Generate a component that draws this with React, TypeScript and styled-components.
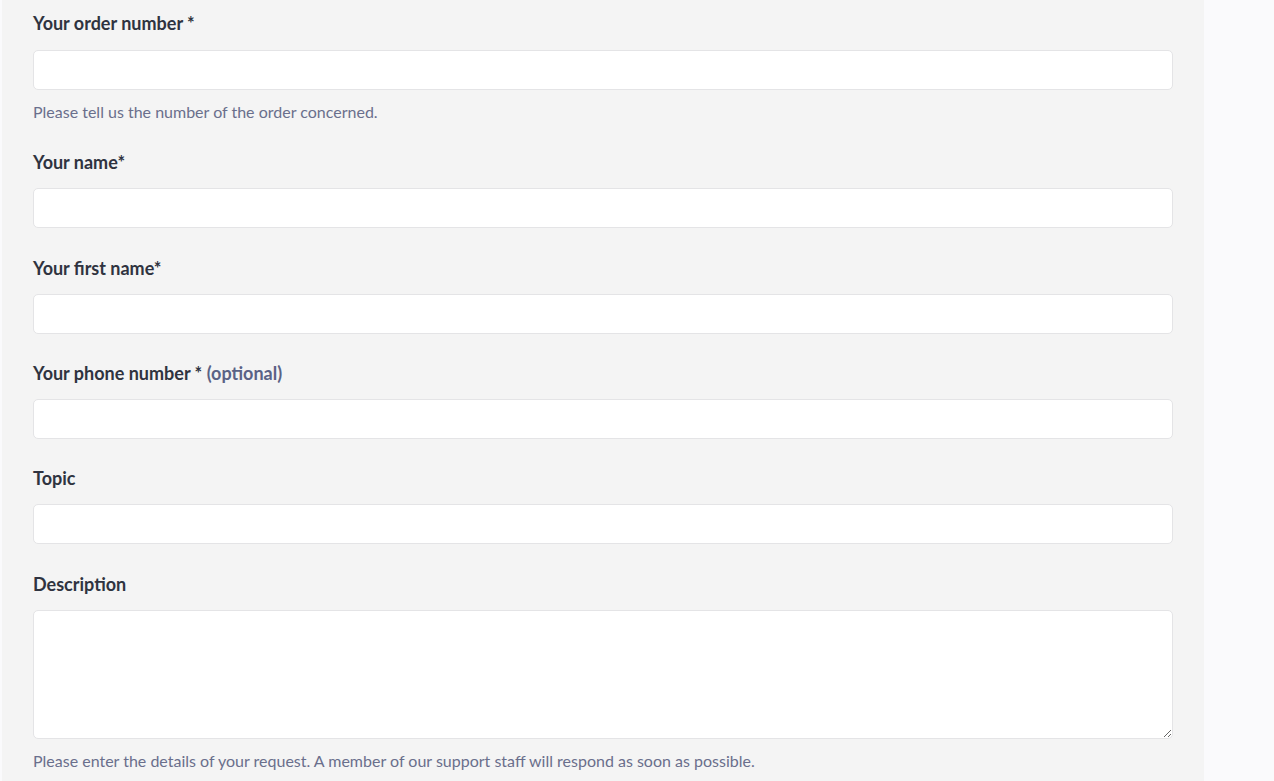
import React from 'react';
import styled, { createGlobalStyle } from 'styled-components';

const GlobalStyle = createGlobalStyle`
  html, body {
    margin:0;
    padding:0;
    background:#fafafc;
    font-family:Lato, "Open Sans", Arial, sans-serif;
  }
`;

const Page = styled.div`
  display:flex;
  flex-direction:row;
  padding-left:2px;
  min-height:781px;
`;

const Panel = styled.form`
  width:1202px;
  box-sizing:border-box;
  background:#f4f4f4;
  padding:11px 31px 20px 31px;
  display:flex;
  flex-direction:column;
`;

const Field = styled.div<{ $gap?: number }>`
  display:flex;
  flex-direction:column;
  margin-bottom:${(p) => (p.$gap ?? 27)}px;
  &:last-child {
    margin-bottom:0;
  }
`;

const Label = styled.label<{ $drop?: number }>`
  display:block;
  font-size:18px;
  line-height:${(p) => 23 + 2 * (p.$drop ?? 2)}px;
  margin-bottom:${(p) => 16 - 2 * (p.$drop ?? 2)}px;
  font-weight:700;
  color:#2f3340;
`;

const Optional = styled.span`
  color:#5a6286;
`;

const Input = styled.input`
  display:block;
  width:100%;
  height:40px;
  box-sizing:border-box;
  background:#fff;
  border:1px solid #e4e4e6;
  border-radius:5px;
  padding:8px 12px;
  font-family:inherit;
  font-size:16px;
  outline:none;
`;

const TextArea = styled.textarea`
  display:block;
  width:100%;
  height:129px;
  box-sizing:border-box;
  background:#fff;
  border:1px solid #e4e4e6;
  border-radius:5px;
  padding:8px 12px;
  font-family:inherit;
  font-size:16px;
  outline:none;
  resize:vertical;
  margin:0;
`;

const Hint = styled.p`
  margin:11px 0 0 0;
  font-size:16px;
  line-height:22px;
  color:#6a6f8c;
`;

function App() {
  return (
    <>
      <GlobalStyle />
      <Page>
        <Panel onSubmit={(e) => e.preventDefault()}>
          <Field $gap={26}>
            <Label $drop={1}>Your order number *</Label>
            <Input />
            <Hint>Please tell us the number of the order concerned.</Hint>
          </Field>
          <Field>
            <Label>Your name*</Label>
            <Input />
          </Field>
          <Field $gap={26}>
            <Label>Your first name*</Label>
            <Input />
          </Field>
          <Field $gap={26}>
            <Label>Your phone number * <Optional>(optional)</Optional></Label>
            <Input />
          </Field>
          <Field>
            <Label>Topic</Label>
            <Input />
          </Field>
          <Field>
            <Label>Description</Label>
            <TextArea />
            <Hint>Please enter the details of your request. A member of our support staff will respond as soon as possible.</Hint>
          </Field>
        </Panel>
      </Page>
    </>
  );
}

export default App;
